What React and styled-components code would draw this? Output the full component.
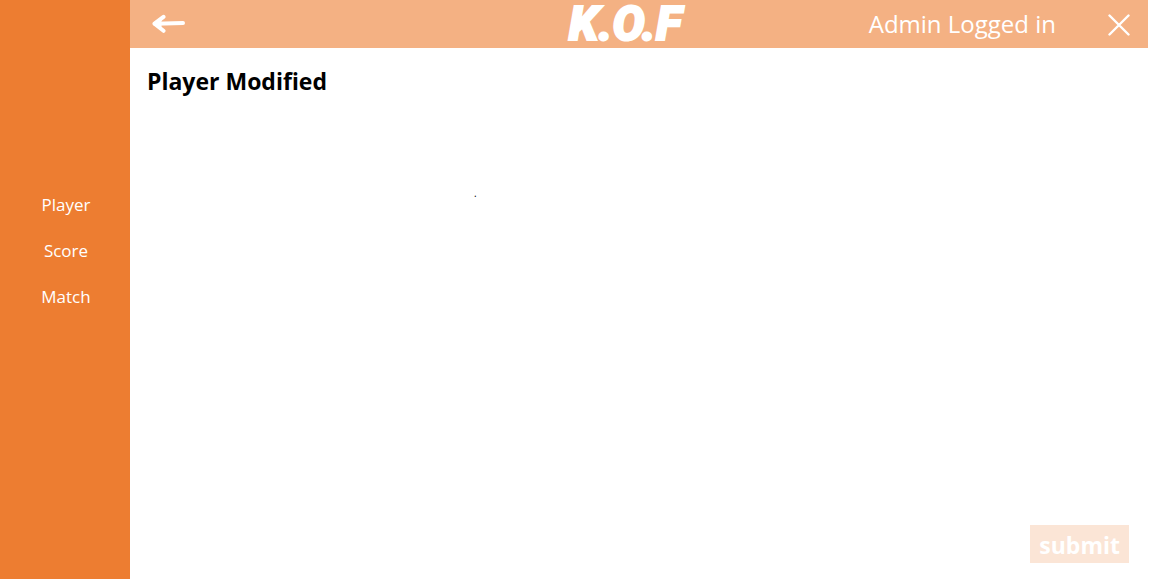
import React from "react";
import styled, { createGlobalStyle } from "styled-components";

const GlobalStyle = createGlobalStyle`
  * { box-sizing: border-box; }
  body {
    margin: 0;
    background: #ffffff;
    color: #000000;
    font-family: "Open Sans", "Noto Sans", sans-serif;
  }
`;

const Shell = styled.div`
  display: grid;
  grid-template-columns: 130px minmax(0, 1fr);
  min-height: 100vh;
`;

const Sidebar = styled.nav`
  display: flex;
  flex-direction: column;
  align-items: center;
  gap: 22px;
  padding: 193px 0 0 2px;
  background: #ed7d31;
`;

const NavLink = styled.a`
  color: #ffffff;
  font-size: 17px;
  line-height: 24px;
  font-weight: 400;
  text-decoration: none;
`;

const Page = styled.div`
  display: flex;
  flex-direction: column;
`;

const Header = styled.header`
  display: grid;
  grid-template-columns: 1fr auto 1fr;
  align-items: center;
  height: 48px;
  margin-right: 1px;
  padding: 0 18px 0 22px;
  background: #f4b183;
  color: #ffffff;
`;

const IconButton = styled.button`
  display: flex;
  justify-self: start;
  padding: 0;
  border: 0;
  background: transparent;
  color: inherit;
  cursor: pointer;
`;

const Logo = styled.span`
  padding-right: 32px;
  font-family: Roboto, "Liberation Sans", sans-serif;
  font-size: 48px;
  line-height: 48px;
  font-weight: 900;
  font-style: italic;
  -webkit-text-stroke: 2px currentColor;
`;

const Session = styled.div`
  display: flex;
  align-items: center;
  justify-self: end;
  gap: 52px;
`;

const Status = styled.span`
  font-size: 24px;
  line-height: 32px;
  white-space: nowrap;
`;

const Content = styled.main`
  flex: 1;
  display: flex;
  flex-direction: column;
  padding: 16px 20px 16px 17px;
`;

const Title = styled.h1`
  margin: 0;
  font-size: 23px;
  line-height: 34px;
  font-weight: 700;
`;

const Message = styled.p`
  flex: 1;
  margin: 0;
  padding: 87px 0 0 327px;
  font-size: 10px;
  line-height: 16px;
`;

const SubmitButton = styled.button`
  align-self: flex-end;
  padding: 4px 9px 2px;
  border: 0;
  background: #fbe5d6;
  color: #ffffff;
  font-family: inherit;
  font-size: 23px;
  line-height: 32px;
  font-weight: 700;
  cursor: pointer;
`;

const links = ["Player", "Score", "Match"];

export default function App() {
  return (
    <>
      <GlobalStyle />
      <Shell>
        <Sidebar aria-label="Main">
          {links.map((name) => (
            <NavLink key={name} href={`#${name.toLowerCase()}`}>{name}</NavLink>
          ))}
        </Sidebar>
        <Page>
          <Header>
            <IconButton type="button" aria-label="Back">
              <svg width="34" height="20" viewBox="0 0 34 20" fill="none" stroke="currentColor" strokeLinecap="round" strokeLinejoin="round">
                <path d="M3 9.7 31 9" strokeWidth="4" />
                <path d="M11.5 2.8 2.5 9.7 11.5 16.8" strokeWidth="4" />
                <path d="M3 9.7 9 5.5 9 14Z" fill="currentColor" strokeWidth="1" />
              </svg>
            </IconButton>
            <Logo>K.O.F</Logo>
            <Session>
              <Status>Admin Logged in</Status>
              <IconButton type="button" aria-label="Close">
                <svg width="22" height="24" viewBox="0 0 22 24" fill="none" stroke="currentColor" strokeWidth="2.4" strokeLinecap="round">
                  <path d="M1.5 3.5 20.5 22.5M20.5 3.5 1.5 22.5" />
                </svg>
              </IconButton>
            </Session>
          </Header>
          <Content>
            <Title>Player Modified</Title>
            <Message>.</Message>
            <SubmitButton type="button">submit</SubmitButton>
          </Content>
        </Page>
      </Shell>
    </>
  );
}
